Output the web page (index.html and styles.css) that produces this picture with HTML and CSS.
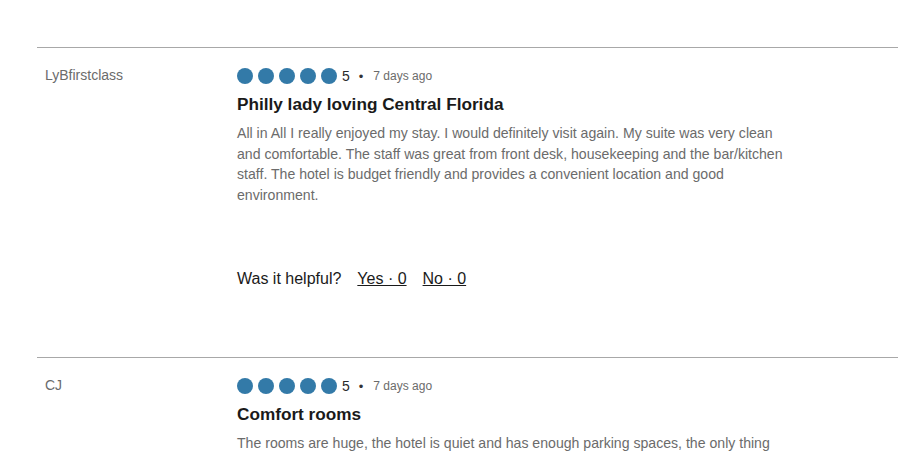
FILE: index.html
```html
<!DOCTYPE html>
<html>
<head>
<meta charset="utf-8">
<link rel="stylesheet" href="styles.css">
</head>
<body>
<div class="reviews">
  <div class="review">
    <div class="author">LyBfirstclass</div>
    <div class="content">
      <div class="meta">
        <span class="bubbles"><i></i><i></i><i></i><i></i><i></i></span>
        <span class="score">5</span>
        <span class="dot">•</span>
        <span class="date">7 days ago</span>
      </div>
      <h3 class="title">Philly lady loving Central Florida</h3>
      <p class="body">All in All I really enjoyed my stay. I would definitely visit again. My suite was very clean and comfortable. The staff was great from front desk, housekeeping and the bar/kitchen staff. The hotel is budget friendly and provides a convenient location and good environment.</p>
      <div class="helpful">
        <span class="q">Was it helpful?</span>
        <a class="vote">Yes · 0</a>
        <a class="vote">No · 0</a>
      </div>
    </div>
  </div>
  <div class="review">
    <div class="author">CJ</div>
    <div class="content">
      <div class="meta">
        <span class="bubbles"><i></i><i></i><i></i><i></i><i></i></span>
        <span class="score">5</span>
        <span class="dot">•</span>
        <span class="date">7 days ago</span>
      </div>
      <h3 class="title">Comfort rooms</h3>
      <p class="body">The rooms are huge, the hotel is quiet and has enough parking spaces, the only thing that could be improved is the breakfast selection in the mornings.</p>
    </div>
  </div>
</div>
</body>
</html>
```
FILE: styles.css
```css
html, body { margin: 0; padding: 0; background: #fff; }
body {
  font-family: "Liberation Sans", Arial, sans-serif;
  color: #1a1a1a;
  overflow: hidden;
  height: 451px;
}
.reviews { padding-top: 47px; margin-left: 37px; }
.review {
  border-top: 1px solid #a8a8a8;
  display: grid;
  grid-template-columns: 200px 556px;
  padding-top: 20px;
  height: 289px;
  overflow: hidden;
}
.author {
  padding-left: 8px;
  font-size: 14px;
  line-height: 14px;
  color: #6b6b6b;
  padding-top: 0;
}
.meta { display: flex; align-items: center; height: 16px; }
.bubbles { display: flex; gap: 5px; }
.bubbles i {
  display: block;
  width: 16px; height: 16px;
  border-radius: 50%;
  background: #337aa8;
}
.score { font-size: 14px; margin-left: 5px; color: #2a2a2a; }
.dot { font-size: 13px; margin: 0 10px 0 9px; color: #333; }
.date { font-size: 12px; color: #6b6b6b; }
.title {
  margin: 10px 0 0;
  font-size: 17.2px;
  font-weight: bold;
  line-height: 20px;
  color: #1a1a1a;
}
.body {
  margin: 9px 0 0;
  font-size: 14.1px;
  line-height: 20.5px;
  color: #6b6b6b;
}
.helpful {
  margin-top: 65px;
  font-size: 16px;
  display: flex;
  color: #1a1a1a;
}
.q { margin-right: 16px; }
.vote { text-decoration: underline; margin-right: 16px; color: #1a1a1a; }
```
